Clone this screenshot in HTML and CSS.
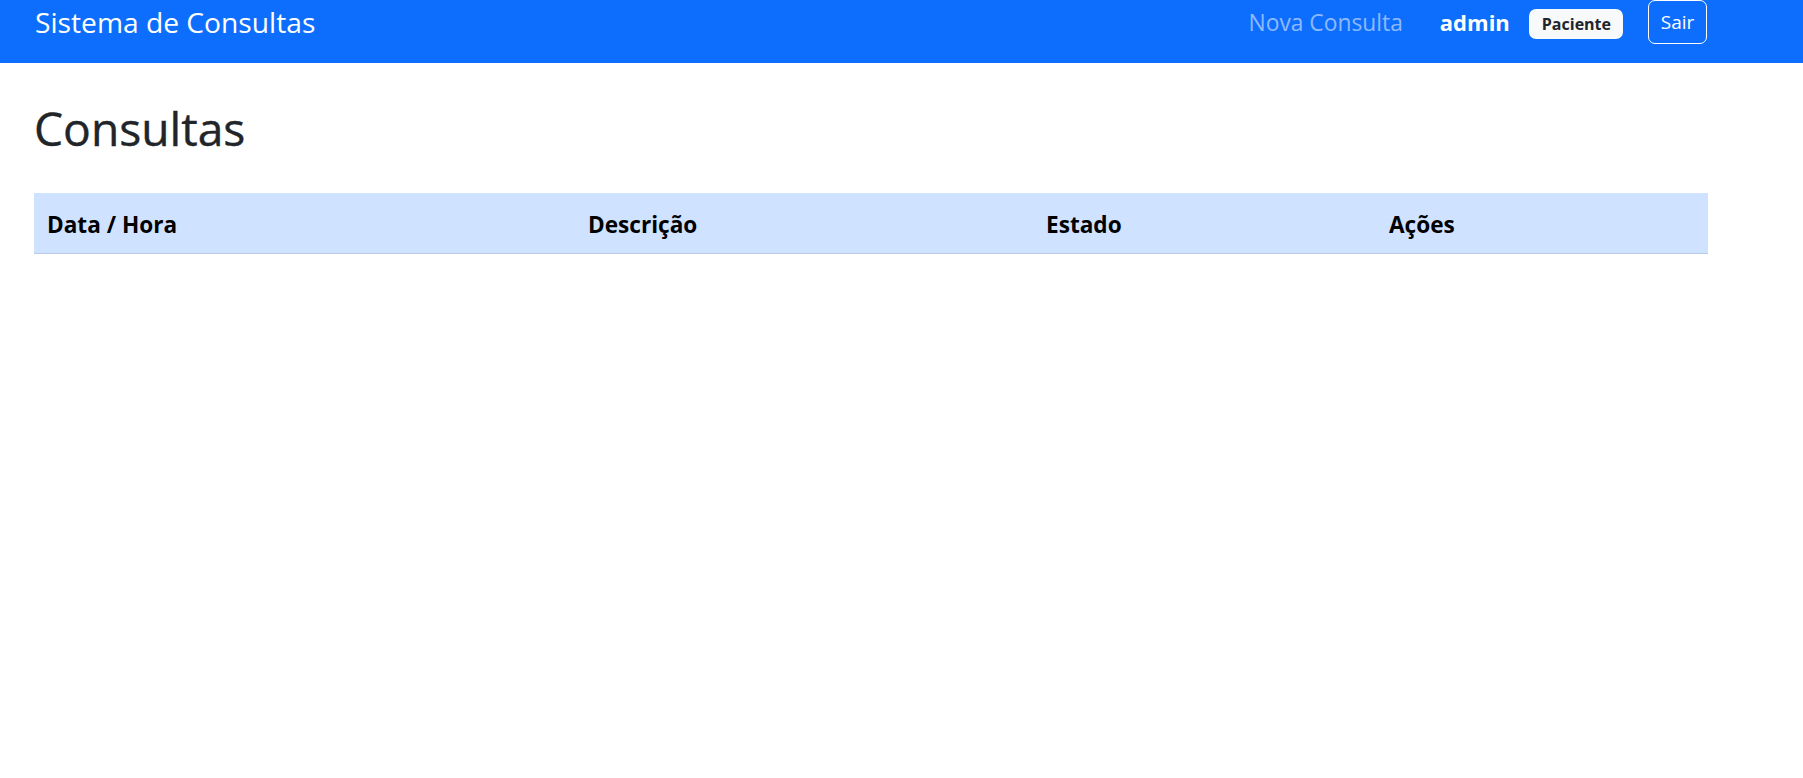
FILE: index.html
```html
<!DOCTYPE html>
<html lang="pt">
<head>
<meta charset="utf-8">
<title>Sistema de Consultas</title>
<link rel="stylesheet" href="styles.css">
</head>
<body>
<nav class="navbar">
  <div class="nav-row">
    <a class="brand" href="#">Sistema de Consultas</a>
    <a class="nav-link" href="#">Nova Consulta</a>
    <span class="user">admin</span>
    <span class="badge">Paciente</span>
    <button class="btn-out">Sair</button>
  </div>
</nav>
<main class="content">
  <h1 class="title">Consultas</h1>
  <table class="table">
    <colgroup>
      <col class="c1"><col class="c2"><col class="c3"><col class="c4">
    </colgroup>
    <thead>
      <tr>
        <th>Data / Hora</th>
        <th>Descrição</th>
        <th>Estado</th>
        <th>Ações</th>
      </tr>
    </thead>
    <tbody></tbody>
  </table>
</main>
</body>
</html>
```
FILE: styles.css
```css
* { box-sizing: border-box; }
body {
  margin: 0;
  font-family: "Open Sans", "Noto Sans", sans-serif;
  background: #fff;
  color: #212529;
}
.navbar {
  background: #0d6efd;
  height: 63px;
  padding: 0 96px 0 35px;
}
.nav-row {
  display: flex;
  align-items: center;
  height: 44px;
}
.brand {
  font-size: 28.2px;
  color: #fff;
  text-decoration: none;
  margin-right: auto;
  white-space: nowrap;
}
.nav-link {
  font-size: 22.8px;
  color: #8db9fe;
  text-decoration: none;
  margin-right: 37px;
}
.user {
  font-size: 22px;
  font-weight: 700;
  color: #fff;
  margin-right: 19px;
}
.badge {
  background: #f8f9fa;
  color: #212529;
  font-size: 16px;
  font-weight: 700;
  height: 30px;
  line-height: 30px;
  padding: 0 12px 0 13px;
  border-radius: 7px;
  margin-top: 4px;
  margin-right: 25px;
}
.btn-out {
  background: transparent;
  color: #fff;
  border: 1px solid #fff;
  border-radius: 7px;
  height: 44px;
  width: 59px;
  padding: 0;
  font-family: inherit;
  font-size: 19px;
  margin-top: -1px;
}
.content {
  padding: 0 95px 0 34px;
}
.title {
  font-size: 46.2px;
  font-weight: 400;
  line-height: 58px;
  margin: 37px 0 35px;
  color: #212529;
  -webkit-text-stroke: 0.4px #212529;
}
.table {
  width: 100%;
  border-collapse: collapse;
  table-layout: fixed;
}
.c1 { width: 541px; }
.c2 { width: 458px; }
.c3 { width: 343px; }
.c4 { width: 332px; }
.table th {
  background: #cfe2ff;
  color: #000;
  text-align: left;
  font-size: 22.6px;
  font-weight: 700;
  line-height: 34px;
  padding: 15px 14px 11px 13px;
  border-bottom: 1px solid #bacbe6;
}
```
